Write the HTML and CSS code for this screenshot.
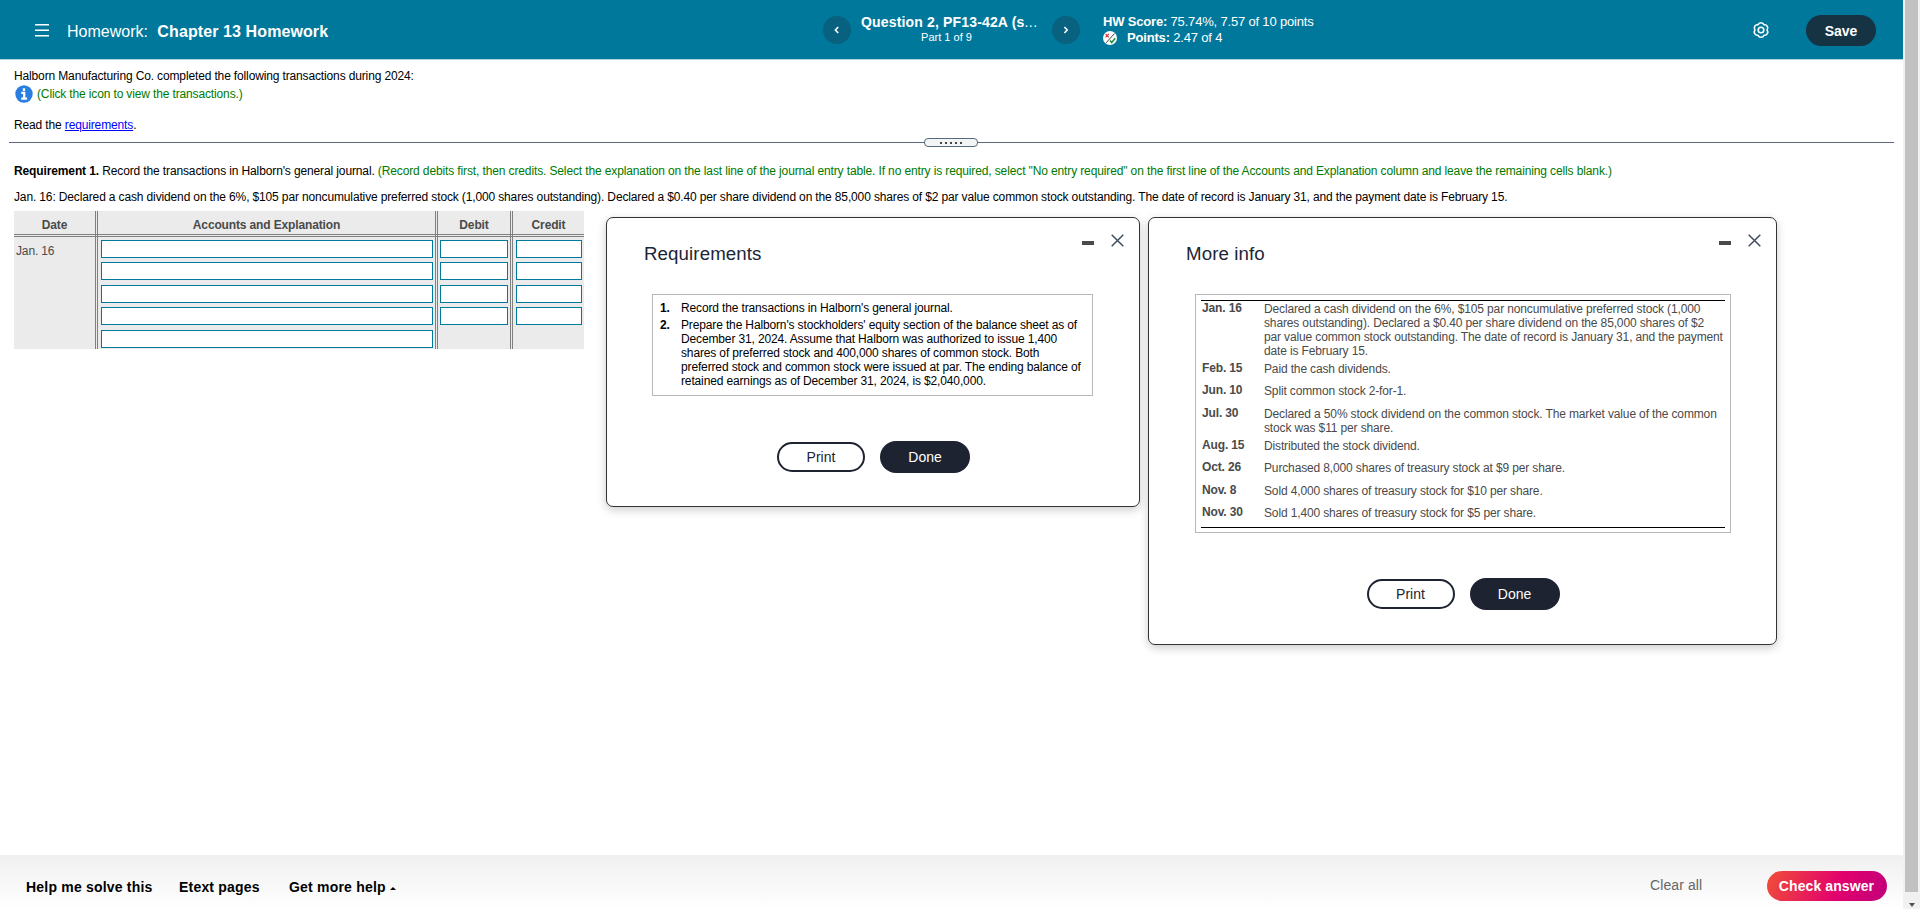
FILE: index.html
```html
<!DOCTYPE html>
<html lang="en">
<head>
    <meta charset="UTF-8">
    <meta name="viewport" content="width=device-width, initial-scale=1.0">
    <title>Chapter 13 Homework</title>
    <link rel="stylesheet" href="styles.css">
</head>
<body>
    <div class="page">
        <header class="topbar">
            <svg class="menu-icon" width="14" height="13" viewBox="0 0 14 13"><path d="M0 .7h14M0 6.2h14M0 11.7h14" stroke="#fff" stroke-width="1.4"/></svg>
            <h1 class="hw-title">Homework: <b>Chapter 13 Homework</b></h1>
            <button class="nav-btn" aria-label="Previous"><svg width="8" height="10" viewBox="0 0 8 10"><path d="M5.2 2L2.4 5l2.8 3" fill="none" stroke="#fff" stroke-width="1.6"/></svg></button>
            <div class="question">
                <div class="question-name">Question 2, PF13-42A (s<span class="dots">...</span></div>
                <div class="question-part">Part 1 of 9</div>
            </div>
            <button class="nav-btn" aria-label="Next"><svg width="8" height="10" viewBox="0 0 8 10"><path d="M2.4 2l2.8 3-2.8 3" fill="none" stroke="#fff" stroke-width="1.6"/></svg></button>
            <div class="score">
                <div class="score-total"><b>HW Score:</b> 75.74%, 7.57 of 10 points</div>
                <div class="points">
                    <svg width="14" height="14" viewBox="0 0 14 14"><circle cx="7" cy="7" r="7" fill="#fff"/><path d="M3.2 11.8L11.4 2.6" stroke="#444" stroke-width="1"/><path d="M2.6 3l3.2 3.4M5.8 3L2.6 6.4" stroke="#d33" stroke-width="1.1"/><path d="M7 9.6l1.7 1.9L12.2 7.2" fill="none" stroke="#1a8a3c" stroke-width="1.5"/></svg>
                    <span class="points-text"><b>Points:</b> 2.47 of 4</span>
                </div>
            </div>
            <svg class="gear" width="18" height="18" viewBox="0 0 18 18" fill="none" stroke="#fff" stroke-width="1.6" stroke-linejoin="round"><path d="M6 3.8A3.2 3.2 0 0 1 12 3.8A3.2 3.2 0 0 1 15 9A3.2 3.2 0 0 1 12 14.2A3.2 3.2 0 0 1 6 14.2A3.2 3.2 0 0 1 3 9A3.2 3.2 0 0 1 6 3.8Z"/><circle cx="9" cy="9" r="2.8"/></svg>
            <button class="save">Save</button>
        </header>

        <main class="content">
            <p class="intro">Halborn Manufacturing Co. completed the following transactions during 2024:</p>
            <p class="view-info">
                <svg width="18" height="18" viewBox="0 0 18 18"><circle cx="9" cy="9" r="8.7" fill="#2a7de1"/><path d="M9 3.3v2.6M6.3 7.8H9.2V13.3M6.2 13.7h5.9" fill="none" stroke="#fff" stroke-width="2.3"/></svg>
                <span class="hint view-text">(Click the icon to view the transactions.)</span>
            </p>
            <p class="read">Read the <a href="#">requirements</a>.</p>

            <div class="divider"><span class="handle"><i></i><i></i><i></i><i></i><i></i></span></div>

            <p class="task"><b>Requirement 1.</b> Record the transactions in Halborn's general journal. <span class="hint">(Record debits first, then credits. Select the explanation on the last line of the journal entry table. If no entry is required, select "No entry required" on the first line of the Accounts and Explanation column and leave the remaining cells blank.)</span></p>
            <p class="entry">Jan. 16: Declared a cash dividend on the 6%, $105 par noncumulative preferred stock (1,000 shares outstanding). Declared a $0.40 per share dividend on the 85,000 shares of $2 par value common stock outstanding. The date of record is January 31, and the payment date is February 15.</p>

            <div class="work">
                <div class="journal">
                    <div class="col">
                        <div class="col-head">Date</div>
                        <div class="col-body date">Jan. 16</div>
                    </div>
                    <div class="col">
                        <div class="col-head">Accounts and Explanation</div>
                        <div class="col-body"><input type="text"><input type="text"><input type="text"><input type="text"><input type="text"></div>
                    </div>
                    <div class="col">
                        <div class="col-head">Debit</div>
                        <div class="col-body debit"><input type="text"><input type="text"><input type="text"><input type="text"></div>
                    </div>
                    <div class="col">
                        <div class="col-head">Credit</div>
                        <div class="col-body"><input type="text"><input type="text"><input type="text"><input type="text"></div>
                    </div>
                </div>

                <section class="dialog dialog-req">
                    <div class="dialog-top">
                        <h2>Requirements</h2>
                        <span class="minimize"></span>
                        <svg class="close" width="13" height="13" viewBox="0 0 13 13"><path d="M.7.7l11.6 11.6M12.3.7L.7 12.3" stroke="#3f4c5c" stroke-width="1.5"/></svg>
                    </div>
                    <ol class="req-list">
                        <li><b>1.</b><span>Record the transactions in Halborn's general journal.</span></li>
                        <li><b>2.</b><span>Prepare the Halborn's stockholders' equity section of the balance sheet as of<br>December 31, 2024. Assume that Halborn was authorized to issue 1,400<br>shares of preferred stock and 400,000 shares of common stock. Both<br>preferred stock and common stock were issued at par. The ending balance of<br>retained earnings as of December 31, 2024, is $2,040,000.</span></li>
                    </ol>
                    <div class="dialog-actions">
                        <button class="print">Print</button>
                        <button class="done">Done</button>
                    </div>
                </section>

                <section class="dialog dialog-info">
                    <div class="dialog-top">
                        <h2>More info</h2>
                        <span class="minimize"></span>
                        <svg class="close" width="13" height="13" viewBox="0 0 13 13"><path d="M.7.7l11.6 11.6M12.3.7L.7 12.3" stroke="#3f4c5c" stroke-width="1.5"/></svg>
                    </div>
                    <div class="info-box">
                        <dl class="info-list">
                            <dt>Jan. 16</dt>
                            <dd>Declared a cash dividend on the 6%, $105 par noncumulative preferred stock (1,000<br>shares outstanding). Declared a $0.40 per share dividend on the 85,000 shares of $2<br>par value common stock outstanding. The date of record is January 31, and the payment<br>date is February 15.</dd>
                            <dt>Feb. 15</dt>
                            <dd>Paid the cash dividends.</dd>
                            <dt>Jun. 10</dt>
                            <dd>Split common stock 2-for-1.</dd>
                            <dt>Jul. 30</dt>
                            <dd>Declared a 50% stock dividend on the common stock. The market value of the common<br>stock was $11 per share.</dd>
                            <dt>Aug. 15</dt>
                            <dd>Distributed the stock dividend.</dd>
                            <dt>Oct. 26</dt>
                            <dd>Purchased 8,000 shares of treasury stock at $9 per share.</dd>
                            <dt>Nov. 8</dt>
                            <dd>Sold 4,000 shares of treasury stock for $10 per share.</dd>
                            <dt>Nov. 30</dt>
                            <dd>Sold 1,400 shares of treasury stock for $5 per share.</dd>
                        </dl>
                    </div>
                    <div class="dialog-actions">
                        <button class="print">Print</button>
                        <button class="done">Done</button>
                    </div>
                </section>
            </div>
        </main>

        <footer class="bottombar">
            <a class="help-solve">Help me solve this</a>
            <a class="etext">Etext pages</a>
            <a class="more-help">Get more help</a>
            <span class="caret-up"></span>
            <a class="clear">Clear all</a>
            <button class="check">Check answer</button>
        </footer>
    </div>
    <div class="scrollbar">
        <div class="thumb"></div>
        <span class="caret-down"></span>
    </div>
</body>
</html>
```

FILE: styles.css
```css
* {
    box-sizing: border-box;
}

body {
    display: flex;
    height: 909px;
    margin: 0;
    overflow: hidden;
    font-family: "Liberation Sans", Arial, sans-serif;
    font-size: 12px;
    line-height: 14px;
    color: #000;
    background: #fff;
}

h1, h2, p, ol, dl, dd {
    margin: 0;
    padding: 0;
}

button {
    padding: 0;
    border: none;
    font-family: inherit;
    cursor: pointer;
}

.page {
    display: flex;
    flex-direction: column;
    width: 1903px;
    height: 909px;
}

/* header */
.topbar {
    display: flex;
    align-items: flex-start;
    height: 60px;
    background: #00789c;
    border-bottom: 1px solid #b5d3df;
    color: #fff;
    white-space: nowrap;
}

.menu-icon {
    margin: 24px 0 0 35px;
}

.hw-title {
    width: 756px;
    margin: 23px 0 0 18px;
    font-size: 16px;
    line-height: 18px;
    font-weight: normal;
}

.hw-title b {
    margin-left: 5px;
    letter-spacing: 0.1px;
}

.nav-btn {
    display: flex;
    align-items: center;
    justify-content: center;
    width: 28px;
    height: 28px;
    margin-top: 16px;
    border-radius: 50%;
    background: #08617f;
}

.question {
    width: 201px;
    margin-top: 14px;
    padding: 0 20px 0 10px;
}

.question-name {
    font-size: 14px;
    line-height: 16px;
    font-weight: bold;
    letter-spacing: 0.16px;
}

.dots {
    font-weight: normal;
    letter-spacing: 0.5px;
}

.question-part {
    margin-top: 1px;
    font-size: 11px;
    line-height: 13px;
    text-align: center;
}

.score {
    width: 649px;
    margin: 14px 0 0 23px;
    font-size: 13px;
    line-height: 16px;
    letter-spacing: -0.18px;
}

.points {
    display: flex;
    gap: 10px;
    align-items: center;
}

.gear {
    margin-top: 21px;
}

.save {
    width: 70px;
    height: 31px;
    margin: 15px 0 0 36px;
    border-radius: 16px;
    background: #163344;
    color: #fff;
    font-size: 14px;
    font-weight: bold;
}

/* problem text */
.content {
    flex: 1;
    padding-top: 9px;
    letter-spacing: -0.14px;
    white-space: nowrap;
}

.content > p {
    margin-left: 14px;
}

.hint {
    color: #007a00;
}

.content > .view-info {
    display: flex;
    gap: 4px;
    height: 18px;
    margin: 2px 0 0 15px;
}

.view-text {
    padding-top: 2px;
}

.read {
    margin-top: 15px;
}

.read a {
    color: #00f;
}

.divider {
    display: flex;
    align-items: center;
    justify-content: center;
    height: 9px;
    margin: 6px 9px 0;
    background: linear-gradient(#5a6b7b, #5a6b7b) 0 4px / 100% 1px no-repeat;
}

.handle {
    display: flex;
    gap: 3px;
    align-items: center;
    justify-content: center;
    width: 54px;
    height: 9px;
    margin-right: 1px;
    border: 1px solid #5a6b7b;
    border-radius: 4px;
    background: #f2f5f6;
}

.handle i {
    width: 2px;
    height: 2px;
    background: #444;
}

.content > .task {
    margin-top: 17px;
    letter-spacing: -0.125px;
}

.entry {
    margin-top: 12px;
}

.work {
    display: flex;
    align-items: flex-start;
    margin-top: 7px;
    padding-left: 14px;
}

/* journal table */
.journal {
    display: grid;
    grid-template-columns: 84px 340px 75px 71px;
    width: 570px;
    height: 138px;
    background: #ebebeb;
    color: #4a4a4a;
}

.col {
    border-right: 3px double #808080;
}

.col:last-child {
    border-right: none;
}

.col-head {
    height: 26px;
    margin-right: -3px;
    padding: 7px 3px 0 0;
    border-bottom: 3px double #808080;
    font-weight: bold;
    text-align: center;
}

.col:last-child .col-head {
    margin-right: 0;
    padding-right: 0;
}

.col-body {
    display: flex;
    flex-direction: column;
    gap: 4.4px;
    padding: 3px 2px 0 3px;
}

.debit {
    padding-left: 2px;
}

.date {
    padding: 7px 2px 0;
}

.journal input {
    width: 100%;
    height: 18px;
    padding: 0;
    border: 1px solid #007a9c;
    background: #fff;
}

/* dialogs */
.dialog {
    margin-top: 6px;
    border: 1px solid #333;
    border-radius: 7px;
    background: #fff;
    box-shadow: 0 3px 10px rgba(0,0,0,0.2);
}

.dialog-req {
    width: 534px;
    height: 290px;
    margin-left: 22px;
}

.dialog-info {
    width: 629px;
    height: 428px;
    margin-left: 8px;
}

.dialog-top {
    display: flex;
    height: 76px;
    padding: 16px 15px 0 37px;
}

.dialog h2 {
    flex: 1;
    margin-top: 9px;
    font-size: 18.7px;
    line-height: 22px;
    font-weight: normal;
    letter-spacing: 0.1px;
    color: #1c2536;
}

.minimize {
    width: 12px;
    height: 4px;
    margin: 7px 17px 0 0;
    background: #4a4a4a;
}

.req-list {
    width: 441px;
    height: 102px;
    margin-left: 45px;
    padding: 6px 7px;
    border: 1px solid #b8b8b8;
    list-style: none;
}

.req-list li {
    display: grid;
    grid-template-columns: 21px 1fr;
    margin-bottom: 3px;
}

.info-box {
    width: 536px;
    height: 239px;
    margin-left: 46px;
    padding: 5px;
    border: 1px solid #b8b8b8;
}

.info-list {
    display: grid;
    grid-template-columns: 62px 1fr;
    grid-template-rows: 60px 22px 23px 32px 22px 23px 22px 1fr;
    height: 228px;
    padding: 0 1px;
    border-top: 1px solid #000;
    border-bottom: 1px solid #000;
    color: #4a4a4a;
}

.info-list dt {
    font-weight: bold;
}

.info-list dd {
    padding-top: 1px;
}

.dialog-actions {
    display: flex;
    gap: 15px;
    align-items: center;
    justify-content: center;
    margin: 45px 0 0 1px;
}

.dialog-actions button {
    font-size: 14px;
}

.print {
    width: 88px;
    height: 30px;
    border: 2px solid #1d2330;
    border-radius: 15px;
    background: #fff;
    color: #1d2330;
}

.done {
    width: 90px;
    height: 32px;
    border-radius: 16px;
    background: #1d2330;
    color: #fff;
}

/* footer */
.bottombar {
    display: flex;
    align-items: flex-start;
    height: 54px;
    padding-left: 26px;
    background: linear-gradient(#f0f0f0, #fff);
    font-size: 14px;
    line-height: 16px;
    font-weight: bold;
    white-space: nowrap;
}

.help-solve, .etext, .more-help {
    margin-top: 24px;
    letter-spacing: 0.2px;
}

.help-solve {
    width: 153px;
}

.etext {
    width: 110px;
}

.more-help {
    width: 101px;
}

.caret-up {
    margin-top: 32px;
    border: 3.5px solid transparent;
    border-top: none;
    border-bottom: 3px solid #000;
}

.clear {
    width: 117px;
    margin: 22px 0 0 1254px;
    font-weight: normal;
    letter-spacing: 0.1px;
    color: #666;
}

.check {
    width: 120px;
    height: 30px;
    margin-top: 16px;
    padding-right: 1px;
    border-radius: 15px;
    background: linear-gradient(110deg, #f04e37, #e2006e 60%, #c0007a);
    color: #fff;
    font-size: 14px;
    font-weight: bold;
    letter-spacing: 0.1px;
}

/* window scrollbar */
.scrollbar {
    display: flex;
    flex-direction: column;
    align-items: center;
    width: 17px;
    background: #f1f1f1;
}

.thumb {
    width: 13px;
    height: 892px;
    background: #c1c1c1;
}

.caret-down {
    margin-top: 11px;
    border: 3.5px solid transparent;
    border-bottom: none;
    border-top: 4px solid #505050;
}
```
